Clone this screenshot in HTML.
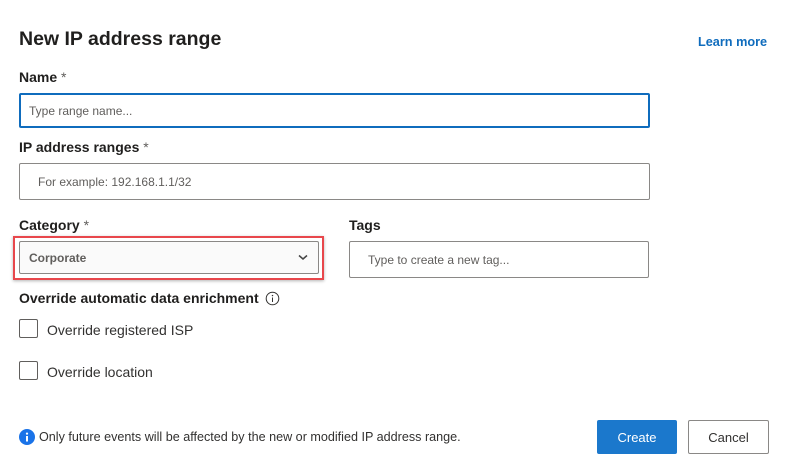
<!DOCTYPE html>
<html><head><style>
body{margin:0;width:788px;height:476px;background:#fff;font-family:"Liberation Sans",sans-serif;color:#323130;position:relative;overflow:hidden}
.a{position:absolute}
.lbl{font-size:14px;font-weight:bold;color:#201f1e}
.lbl span{font-weight:normal;color:#605e5c}
.inp{position:absolute;box-sizing:border-box;border:1px solid #8a8886;border-radius:2px;font-size:12.5px;color:#605e5c;display:flex;align-items:center}
.cb{position:absolute;width:19px;height:19px;box-sizing:border-box;border:1px solid #605e5c;border-radius:2px}
.ct{position:absolute;font-size:14px;color:#323130}
</style></head><body>
<div class="a" style="left:19px;top:28px;font-size:19.5px;font-weight:bold;color:#201f1e">New IP address range</div>
<div class="a" style="left:698px;top:35px;font-size:12.7px;font-weight:bold;color:#0f6cbd">Learn more</div>
<div class="a lbl" style="left:19px;top:69px">Name <span>*</span></div>
<div class="inp" style="left:19px;top:93px;width:631px;height:35px;border:2px solid #0f6cbd;padding-left:8px;font-size:12px">Type range name...</div>
<div class="a lbl" style="left:19px;top:139px">IP address ranges <span>*</span></div>
<div class="inp" style="left:19px;top:163px;width:631px;height:37px;padding-left:18px;font-size:12px">For example: 192.168.1.1/32</div>
<div class="a lbl" style="left:19px;top:217px">Category <span>*</span></div>
<div class="a" style="left:13px;top:236px;width:307px;height:40px;border:2px solid #e8474c;box-shadow:0 1px 3px rgba(0,0,0,.3)"></div>
<div class="inp" style="left:19px;top:241px;width:300px;height:33px;padding-left:9px;font-weight:bold;font-size:12px;color:#605e5c;background:#fafafa">Corporate
<svg class="a" style="left:278px;top:12px" width="10" height="7" viewBox="0 0 10 7"><path d="M1 1.5 L5 5 L9 1.5" fill="none" stroke="#444" stroke-width="1.5"/></svg></div>
<div class="a lbl" style="left:349px;top:217px">Tags</div>
<div class="inp" style="left:349px;top:241px;width:300px;height:37px;padding-left:18px;font-size:12px">Type to create a new tag...</div>
<div class="a lbl" style="left:19px;top:290px">Override automatic data enrichment
<svg style="vertical-align:-3px;margin-left:2px" width="15" height="15" viewBox="0 0 15 15"><circle cx="7.5" cy="7.5" r="6.3" fill="none" stroke="#323130" stroke-width="1"/><rect x="7" y="6.5" width="1" height="4.5" fill="#323130"/><circle cx="7.5" cy="4.6" r=".7" fill="#323130"/></svg></div>
<div class="cb" style="left:19px;top:319px"></div>
<div class="ct" style="left:47px;top:322px">Override registered ISP</div>
<div class="cb" style="left:19px;top:361px"></div>
<div class="ct" style="left:47px;top:364px">Override location</div>
<svg class="a" style="left:19px;top:429px" width="16" height="16" viewBox="0 0 16 16"><circle cx="8" cy="8" r="8" fill="#1a73e8"/><rect x="7" y="7" width="2" height="5.5" fill="#fff"/><circle cx="8" cy="4.6" r="1.1" fill="#fff"/></svg>
<div class="a" style="left:39px;top:430px;font-size:12.6px;color:#323130">Only future events will be affected by the new or modified IP address range.</div>
<div class="a" style="left:597px;top:420px;width:80px;height:34px;background:#1b78cc;border-radius:2px;color:#fff;font-size:13px;display:flex;align-items:center;justify-content:center">Create</div>
<div class="a" style="left:688px;top:420px;width:81px;height:34px;box-sizing:border-box;border:1px solid #8a8886;border-radius:2px;font-size:13px;display:flex;align-items:center;justify-content:center">Cancel</div>
</body></html>
